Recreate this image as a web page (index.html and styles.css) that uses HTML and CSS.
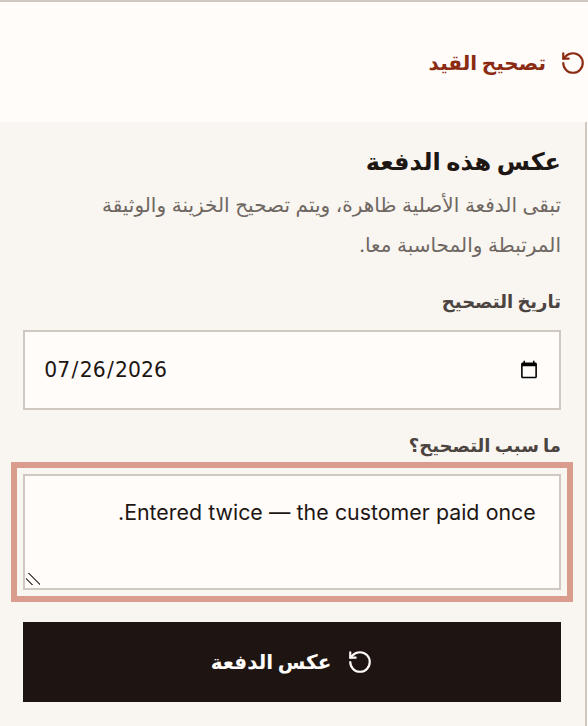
FILE: index.html
```html
<!DOCTYPE html>
<html lang="ar" dir="rtl">
<head>
<meta charset="utf-8">
<title>عكس هذه الدفعة</title>
<link rel="stylesheet" href="styles.css">
</head>
<body>
<div class="panel">
  <header class="head">
    <button class="correct" type="button">
      <svg class="icon" viewBox="0 0 24 24" aria-hidden="true"><path d="M3 12a9 9 0 1 0 9-9 9.75 9.75 0 0 0-6.74 2.74L3 8"/><path d="M3 3v5h5"/></svg>
      <span>تصحيح القيد</span>
    </button>
  </header>
  <form class="form">
    <h2 class="title">عكس هذه الدفعة</h2>
    <p class="desc">تبقى الدفعة الأصلية ظاهرة، ويتم تصحيح الخزينة والوثيقة المرتبطة والمحاسبة معا.</p>
    <label class="label" for="d">تاريخ التصحيح</label>
    <input class="field date" id="d" type="date" dir="ltr" value="2026-07-26">
    <label class="label why" for="r">ما سبب التصحيح؟</label>
    <div class="focus"><textarea class="field reason" id="r">Entered twice — the customer paid once.</textarea></div>
    <button class="submit" type="button">
      <svg class="icon" viewBox="0 0 24 24" aria-hidden="true"><path d="M3 12a9 9 0 1 0 9-9 9.75 9.75 0 0 0-6.74 2.74L3 8"/><path d="M3 3v5h5"/></svg>
      <span>عكس الدفعة</span>
    </button>
  </form>
</div>
</body>
</html>
```
FILE: styles.css
```css
* { box-sizing: border-box; }
html, body { margin: 0; height: 100%; }
body {
  background: #f9f5f0;
  color: #1d1613;
  font-family: Inter, "DejaVu Sans", sans-serif;
  overflow: hidden;
}
.panel {
  height: 726px;
  border-top: 2px solid #d2c8c2;
  background: #fffcfa;
}
.head {
  height: 120px;
  background: #fffcfa;
  display: flex;
  align-items: center;
  padding: 2px 2px 0 0;
}
.correct {
  display: flex;
  align-items: center;
  gap: 14px;
  border: 0;
  background: none;
  padding: 0;
  color: #8a2b12;
  font: 700 20px Inter, "DejaVu Sans", sans-serif;
}
.icon {
  width: 26px;
  height: 26px;
  fill: none;
  stroke: currentColor;
  stroke-width: 2;
  stroke-linecap: round;
  stroke-linejoin: round;
}
.form {
  height: 604px;
  margin-right: 1px;
  border-right: 2px solid #d2c8c2;
  background: #f9f5f0;
  padding: 24px 24px 0 23px;
  display: flex;
  flex-direction: column;
}
.title { margin: 0; font-size: 24px; line-height: 32px; font-weight: 700; color: #1d1613; }
.desc { margin: 7px 0 0; padding-left: 40px; font-size: 20px; line-height: 40px; color: #6f6762; }
.label { margin-top: 25px; font-size: 18px; line-height: 24px; font-weight: 700; color: #4c4440; }
.why { margin-top: 24px; }
.field {
  zoom: 1.3333;
  width: 100%;
  border: 2px solid #d2c8c2;
  border-radius: 0;
  background: #fffcfa;
  color: #1d1613;
  font: 400 16px Inter, "DejaVu Sans", sans-serif;
  outline: none;
}
.date { height: 60px; margin-top: 12px; padding: 0 13px 0 13.5px; font-family: "DejaVu Sans", sans-serif; font-size: 15.25px; }
.focus { margin: 4px -12px 0 -12px; border: 6px solid #d99c8d; padding: 6px; display: flex; }
.reason { height: 87px; padding: 16.5px 17.5px 0; display: block; resize: vertical; line-height: 21px; word-spacing: .2px; }
.reason::-webkit-resizer {
  background: linear-gradient(45deg,
    transparent 21%, #5c5654 21%, #5c5654 27%, transparent 27%,
    transparent 47%, #5c5654 47%, #5c5654 53%, transparent 53%) 1px -2px no-repeat;
}
.submit {
  margin-top: 20px;
  height: 80px;
  border: 0;
  background: #1e1512;
  color: #fffcfa;
  display: flex;
  align-items: center;
  justify-content: center;
  gap: 16px;
  font: 700 20px Inter, "DejaVu Sans", sans-serif;
}
```
